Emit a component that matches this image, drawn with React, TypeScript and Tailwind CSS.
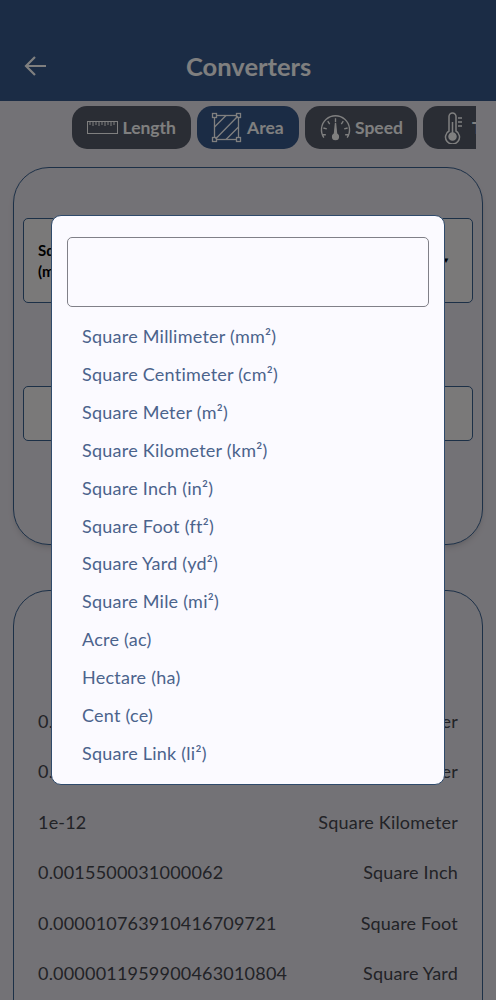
const FONT = "font-['Lato','Noto_Sans',sans-serif]";

const units = [
  "Square Millimeter (mm²)",
  "Square Centimeter (cm²)",
  "Square Meter (m²)",
  "Square Kilometer (km²)",
  "Square Inch (in²)",
  "Square Foot (ft²)",
  "Square Yard (yd²)",
  "Square Mile (mi²)",
  "Acre (ac)",
  "Hectare (ha)",
  "Cent (ce)",
  "Square Link (li²)",
];

const results = [
  ["0.000001", "Square Millimeter"],
  ["0.0001", "Square Centimeter"],
  ["1e-12", "Square Kilometer"],
  ["0.0015500031000062", "Square Inch"],
  ["0.000010763910416709721", "Square Foot"],
  ["0.0000011959900463010804", "Square Yard"],
];

function Ruler() {
  return (
    <svg className="shrink-0" width="32" height="14" viewBox="0 0 32 14" fill="none" stroke="currentColor" strokeWidth="1">
      <rect x="0.5" y="0.5" width="30" height="12" />
      <path d="M3 1v3M6 1v4M9 1v3M12 1v4M15 1v3M18 1v4M21 1v3M24 1v4M27 1v3" />
    </svg>
  );
}

function AreaIcon() {
  return (
    <svg className="shrink-0" width="31" height="32" viewBox="0 0 31 32" fill="none" stroke="currentColor" strokeWidth="1.3">
      <rect x="3.500" y="3.500" width="24" height="24" />
      <rect x="1.500" y="1.500" width="4" height="4" fill="#36588a" />
      <rect x="25.500" y="1.500" width="4" height="4" fill="#36588a" />
      <rect x="1.500" y="25.500" width="4" height="4" fill="#36588a" />
      <rect x="25.500" y="25.500" width="4" height="4" fill="#36588a" />
      <path d="M3.500 15 15 3.500M4.500 27 27 4M15 27.500 27.500 15" />
    </svg>
  );
}

function Gauge() {
  return (
    <svg className="shrink-0" width="31" height="30" viewBox="0 0 32 30" fill="none" stroke="currentColor" strokeWidth="1.4">
      <path d="M4 25A14.500 14.500 0 1 1 28 25" />
      <path d="M16 5v4M8 8l2 3M24 8l-2 3M3.500 15l3.500 1M28.500 15l-3.500 1M2.500 22h3.500M29.500 22H26" />
      <path d="M16 10l1.200 12h-2.400z" fill="currentColor" />
      <circle cx="16" cy="24" r="3" fill="currentColor" />
    </svg>
  );
}

function Thermo() {
  return (
    <svg className="shrink-0" width="20" height="32" viewBox="0 0 20 32" fill="none" stroke="currentColor" strokeWidth="1.500">
      <path d="M5 3.500a3.500 3.500 0 0 1 7 0V18a7 7 0 1 1-7 0z" transform="translate(0 1)" />
      <circle cx="8.500" cy="24.500" r="3.500" fill="currentColor" />
      <path d="M8.500 10v12M14 6h4M14 10h4M14 14h4" />
    </svg>
  );
}

function Pill({ icon, label, active, className }: { icon: React.ReactNode; label: string; active?: boolean; className: string }) {
  return (
    <div className={`flex h-[43px] shrink-0 items-center rounded-[15px] text-[17.5px] font-bold ${active ? "bg-[#36588a]" : "bg-[#545a68]"} text-white ${className}`}>
      {icon}
      <span className="mt-[1px]">{label}</span>
    </div>
  );
}

export default function App() {
  return (
    <div className={`relative h-[1000px] w-[496px] overflow-hidden bg-[#e7e4ec] ${FONT}`}>
      <header className="flex h-[101px] items-end bg-[#36588a] pb-[18px] text-white">
        <div className="flex h-[36px] items-center">
          <svg className="ml-[24px] mt-[1px]" width="24" height="24" viewBox="0 0 24 24" fill="none" stroke="currentColor" strokeWidth="2.200">
            <path d="M22 12H2M11 3l-9 9 9 9" />
          </svg>
          <h1 className="ml-[138px] mt-[2px] text-[25.5px] font-bold leading-[34px]">Converters</h1>
        </div>
      </header>

      <div className="ml-[72px] mt-[5px] flex w-[404px] gap-[6px] overflow-hidden">
        <Pill className="w-[119px] gap-[3.500px] pl-[15px]" icon={<Ruler />} label="Length" />
        <Pill active className="w-[102px] gap-[5px] pl-[14px]" icon={<AreaIcon />} label="Area" />
        <Pill className="w-[112px] gap-[4px] pl-[15px]" icon={<Gauge />} label="Speed" />
        <Pill className="w-[150px] gap-[8px] pl-[21px]" icon={<Thermo />} label="Temperature" />
      </div>

      <section className="mx-[13px] mt-[18px] h-[378px] rounded-[36px] border border-[#38608f] px-[9px] pt-[50px] shadow-md">
        <div className="flex h-[85px] items-center justify-between rounded-[5px] border border-[#38608f] bg-[#f4f3f2] pl-[14px] pr-[22px] text-[15px] font-bold leading-[21px] text-black">
          <span>Square Meter<br />(m²)</span>
          <span className="text-[8px]">▼</span>
        </div>
        <div className="mt-[83px] h-[55px] rounded-[5px] border border-[#38608f] bg-[#f4f3f2]" />
      </section>

      <section className="mx-[13px] mt-[45px] h-[500px] rounded-t-[36px] border border-[#38608f] px-[24px] pt-[105px] text-[18px] tracking-[0.2px] text-[#44464e]">
        {results.map(([v, u]) => (
          <div key={u} className="flex h-[50.500px] items-center justify-between">
            <span>{v}</span>
            <span>{u}</span>
          </div>
        ))}
      </section>

      <div className="absolute inset-0 bg-black/50" />

      <div className="absolute left-[51px] top-[215px] h-[570px] w-[394px] rounded-[10px] border-[1.500px] border-[#2f4a6b] bg-[#fbfaff] px-[15px] pt-[21px]">
        <div className="h-[70px] rounded-[5px] border-[1.500px] border-[#808088]" />
        <ul className="mt-[11px] pl-[15px] text-[18px] leading-[37.900px] tracking-[0.24px] text-[#4b638c]">
          {units.map((u) => (
            <li key={u}>{u}</li>
          ))}
        </ul>
      </div>
    </div>
  );
}
